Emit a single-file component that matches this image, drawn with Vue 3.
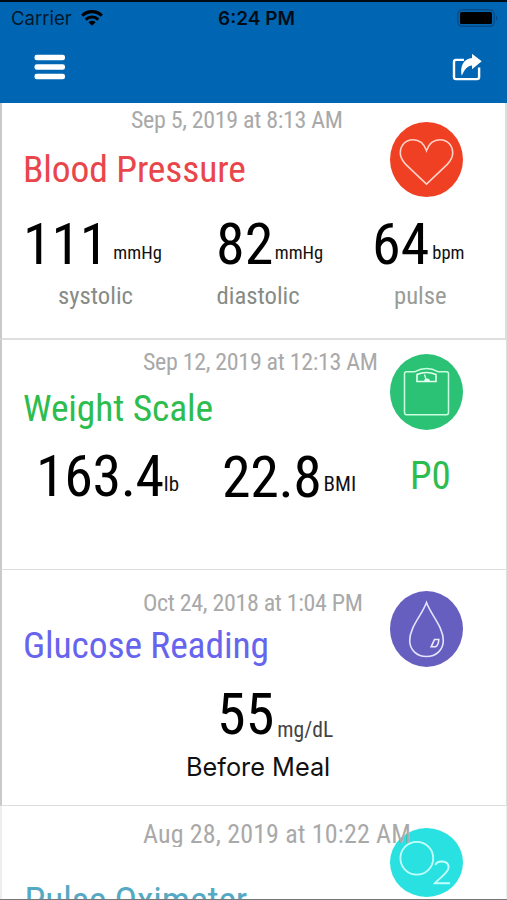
<template>
  <div class="phone">
    <header class="top">
      <div class="status">
        <div class="carrier">
          <span>Carrier</span>
          <svg width="22" height="16" viewBox="0 0 22 16">
            <path d="M1.2 5.6a14 14 0 0 1 19.6 0" fill="none" stroke="#000" stroke-width="3.1" />
            <path d="M4.7 9.6a9 9 0 0 1 12.6 0" fill="none" stroke="#000" stroke-width="2.9" />
            <path d="M7.4 12.2a5.2 5.2 0 0 1 7.2 0L11 15.8z" fill="#000" />
          </svg>
        </div>
        <div class="time">6:24 PM</div>
        <svg class="battery" width="42" height="18" viewBox="0 0 42 18">
          <rect x="0.8" y="0.8" width="36.4" height="16.4" rx="4.5" fill="none" stroke="#084a86" stroke-width="1.4" />
          <rect x="3" y="3" width="32" height="12" rx="1.6" fill="#000" />
          <path d="M39 6.2c1.8.8 1.8 4.8 0 5.6z" fill="#084a86" />
        </svg>
      </div>
      <div class="nav">
        <svg width="32" height="26" viewBox="0 0 32 26">
          <rect x="0.5" y="0.7" width="30.5" height="5.6" rx="2.3" fill="#fff" />
          <rect x="0.5" y="10.2" width="30.5" height="5.6" rx="2.3" fill="#fff" />
          <rect x="0.5" y="19.7" width="30.5" height="5.6" rx="2.3" fill="#fff" />
        </svg>
        <svg width="30" height="28" viewBox="0 0 30 28">
          <path d="M12 5.9H4Q2 5.9 2 8V23Q2 25.1 4 25.1H25Q27.100 25.1 27.100 23V13.500" fill="none" stroke="#fff" stroke-width="2.4" />
          <path d="M20 -.2L29.700 7.300L20 15.200V11.500C15.500 12 12.500 15 9.800 21.800C7.500 13 11.500 4.500 20 4Z" fill="#fff" stroke="#0066b3" stroke-width="1.600" paint-order="stroke" />
        </svg>
      </div>
    </header>

    <section v-for="card in cards" :key="card.id" class="card" :class="card.id">
      <div class="head">
        <div class="labels">
          <div class="date">{{ card.date }}</div>
          <h2>{{ card.title }}</h2>
        </div>
        <svg v-if="card.id === 'pressure'" class="icon" viewBox="0 0 73 75" preserveAspectRatio="none">
          <ellipse cx="36.5" cy="37.5" rx="36.5" ry="37.5" fill="#f04023" />
          <path d="M36.5 28.5C33.5 20 28.5 17.7 23 17.7C15.5 17.7 10.3 23.5 10.3 31C10.3 36 12.5 39 16 42.6L36.5 62.2L57 42.6C60.5 39 62.7 36 62.7 31C62.7 23.5 57.5 17.7 50 17.7C44.5 17.7 39.5 20 36.5 28.5Z" fill="none" stroke="#ffd3c8" stroke-width="1.6" />
        </svg>
        <svg v-else-if="card.id === 'weight'" class="icon" viewBox="0 0 73 76" preserveAspectRatio="none">
          <ellipse cx="36.5" cy="38" rx="36.5" ry="38" fill="#2bc275" />
          <path d="M25 17.7H16.5Q14.5 17.7 14.5 19.7V58.5Q14.5 60.7 16.5 60.7H56.5Q58.5 60.7 58.5 58.5V19.7Q58.5 17.7 56.5 17.7H48Q36.5 11.5 25 17.7Z" fill="none" stroke="#c9ffe0" stroke-width="1.5" />
          <path d="M27 20.5Q36.5 16.5 46 20.5V27.5H27Z" fill="none" stroke="#e2fff0" stroke-width="1.6" />
          <path d="M34.5 20.5L36.5 27" stroke="#e2fff0" stroke-width="1.3" />
          <path d="M34 27.5a3 3 0 0 1 6 0z" fill="#e2fff0" />
        </svg>
        <svg v-else-if="card.id === 'glucose'" class="icon" viewBox="0 0 73 76" preserveAspectRatio="none">
          <ellipse cx="36.5" cy="38" rx="36.5" ry="38" fill="#675fc0" />
          <path d="M36.5 11.5C32 24 19.7 36 19.7 49.5C19.7 59 27 65.5 36.5 65.5C46 65.5 53.3 59 53.3 49.5C53.3 36 41 24 36.5 11.5Z" fill="none" stroke="#e6e3ff" stroke-width="1.6" />
          <path d="M44.5 48.5H48.8Q48.6 54 45.5 55.8H41.2Z" fill="none" stroke="#eeebff" stroke-width="1.6" />
        </svg>
        <svg v-else class="icon" viewBox="0 0 73 69" preserveAspectRatio="none">
          <ellipse cx="36.5" cy="34.5" rx="36.5" ry="34.5" fill="#29e1e0" />
          <circle cx="26.8" cy="30.2" r="16.4" fill="none" stroke="#c4ffff" stroke-width="1.8" />
          <path d="M45.2 37C47.5 32 58.6 32 58.6 39.5C58.6 44.5 50 49.5 45 55.2H60" fill="none" stroke="#c4ffff" stroke-width="1.9" />
        </svg>
      </div>
      <div class="readings">
        <div v-for="r in card.readings" :key="r.id" class="reading" :class="r.id">
          <div class="figure">
            <span class="value">{{ r.value }}</span>
            <span class="unit">{{ r.unit }}</span>
          </div>
          <div v-if="r.label" class="label">{{ r.label }}</div>
        </div>
        <div v-if="card.person" class="person">{{ card.person }}</div>
      </div>
    </section>
  </div>
</template>

<script setup>
import { ref } from "vue";

const cards = ref([
  {
    id: "pressure",
    title: "Blood Pressure",
    date: "Sep 5, 2019 at 8:13 AM",
    readings: [
      { id: "systolic", value: "111", unit: "mmHg", label: "systolic" },
      { id: "diastolic", value: "82", unit: "mmHg", label: "diastolic" },
      { id: "pulse", value: "64", unit: "bpm", label: "pulse" },
    ],
  },
  {
    id: "weight",
    title: "Weight Scale",
    date: "Sep 12, 2019 at 12:13 AM",
    readings: [
      { id: "pounds", value: "163.4", unit: "lb" },
      { id: "bmi", value: "22.8", unit: "BMI" },
    ],
    person: "P0",
  },
  {
    id: "glucose",
    title: "Glucose Reading",
    date: "Oct 24, 2018 at 1:04 PM",
    readings: [{ id: "sugar", value: "55", unit: "mg/dL", label: "Before Meal" }],
  },
  {
    id: "oximeter",
    title: "Pulse Oximeter",
    date: "Aug 28, 2019 at 10:22 AM",
    readings: [],
  },
]);
</script>

<style>
body {
  margin: 0;
}
</style>

<style scoped>
.phone {
  box-sizing: border-box;
  width: 507px;
  height: 900px;
  overflow: hidden;
  border-top: 2px solid #020b14;
  border-bottom: 1px solid #777;
  background: #fff;
  font-family: "Roboto Condensed", Roboto, sans-serif;
  font-stretch: 75%;
  white-space: nowrap;
}

.top {
  height: 101px;
  background: #0066b3;
}

.status {
  display: flex;
  align-items: center;
  height: 32px;
  padding: 0 8px 0 11px;
  font-family: Inter, sans-serif;
  font-stretch: normal;
  font-size: 18.5px;
  color: #00172b;
}

.carrier {
  display: flex;
  align-items: center;
  gap: 9px;
  width: 207px;
}

.time {
  flex: 1;
  font-size: 19px;
  font-weight: 600;
  color: #000c18;
}

.battery {
  margin-bottom: 1px;
}

.nav {
  display: flex;
  justify-content: space-between;
  padding: 20px 25px 0 34px;
}

.card {
  box-sizing: border-box;
  border-left: 2px solid #c9c9cb;
  border-right: 1px solid #dedede;
  border-bottom: 2px solid #dedede;
}

.pressure {
  height: 237px;
  border-right-width: 2px;
}

.weight {
  height: 230px;
  border-bottom-width: 1px;
}

.glucose {
  height: 236px;
  border-bottom-width: 1px;
}

.oximeter {
  height: 120px;
  border-color: #eee;
}

.head {
  display: flex;
  align-items: flex-start;
}

.labels {
  width: 388px;
}

.date {
  font-size: 24px;
  line-height: 28px;
  letter-spacing: -0.33px;
  color: #a9a9a9;
}

h2 {
  margin: 0 0 0 21px;
  font-size: 37.5px;
  font-weight: 400;
  line-height: 44px;
  letter-spacing: -0.12px;
}

.icon {
  width: 73px;
  height: 76px;
}

.readings {
  display: flex;
}

.figure {
  display: flex;
  align-items: flex-start;
  height: 58px;
}

.value {
  font-size: 58px;
  line-height: 58px;
  color: #000;
}

.unit {
  font-size: 18.5px;
  line-height: 22px;
  color: #111;
}

.label {
  margin-top: 9.5px;
  font-size: 24.7px;
  line-height: 28px;
  color: #868b86;
}

/* blood pressure */
.pressure .date {
  padding: 3px 0 0 129px;
}

.pressure h2 {
  margin-top: 13px;
  color: #e9464b;
}

.pressure .icon {
  height: 75px;
  margin-top: 18.5px;
}

.pressure .readings {
  margin-top: 18px;
}

.pressure .unit {
  margin-top: 27.6px;
}

.systolic {
  box-sizing: border-box;
  width: 214px;
  padding-left: 21px;
}

.systolic .value {
  letter-spacing: -0.2px;
}

.systolic .unit {
  margin-left: 5px;
}

.systolic .label {
  padding-left: 35px;
}

.diastolic {
  width: 156px;
}

.diastolic .unit {
  margin-left: 1.5px;
}

.diastolic .label {
  padding-left: 0.5px;
}

.pulse .unit {
  margin-left: 3px;
}

.pulse .label {
  padding-left: 22px;
  color: #999c99;
}

/* weight */
.weight .date {
  padding: 8px 0 0 141px;
}

.weight h2 {
  margin-top: 9.5px;
  color: #2dbd4e;
}

.weight .icon {
  margin-top: 14px;
}

.weight .readings {
  margin-top: 16.5px;
}

.weight .value {
  letter-spacing: -0.4px;
}

.pounds {
  box-sizing: border-box;
  width: 220px;
  padding-left: 34px;
}

.pounds .unit {
  margin-top: 26.5px;
  font-size: 21px;
}

.bmi {
  width: 188px;
  margin-top: 1.5px;
}

.bmi .unit {
  margin-top: 25px;
  margin-left: 2px;
  font-size: 21px;
}

.person {
  margin-top: 7.5px;
  font-size: 39px;
  line-height: 44px;
  color: #2dbd4e;
}

/* glucose */
.glucose .date {
  padding: 18.5px 0 0 141px;
}

.glucose h2 {
  margin-top: 6px;
  color: #6765ee;
}

.glucose .icon {
  margin-top: 21px;
}

.glucose .readings {
  margin-top: 18px;
}

.sugar {
  padding-left: 184px;
}

.sugar .value {
  padding-left: 31px;
}

.sugar .unit {
  margin-top: 34px;
  margin-left: 3px;
  font-size: 21.6px;
  color: #444;
}

.sugar .label {
  margin-top: 9.5px;
  font-family: Inter, sans-serif;
  font-stretch: normal;
  font-size: 25.3px;
  color: #111;
}

/* pulse oximeter, the date runs over the icon */
.oximeter .date {
  position: relative;
  z-index: 1;
  height: 27px;
  margin-right: -40px;
  padding: 14px 0 0 141px;
  overflow: hidden;
  font-size: 26px;
  letter-spacing: 0.15px;
}

.oximeter h2 {
  margin-top: 31px;
  margin-left: 22.5px;
  color: #55a9c2;
}

.oximeter .icon {
  height: 69px;
  margin-top: 22px;
}
</style>
